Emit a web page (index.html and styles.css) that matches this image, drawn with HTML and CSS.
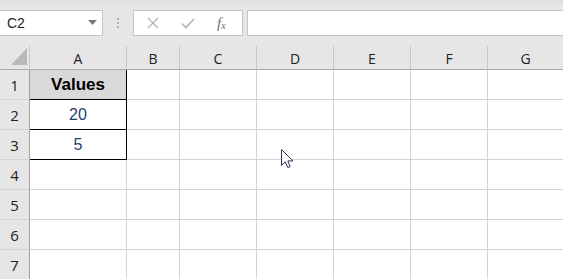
FILE: index.html
```html
<!DOCTYPE html>
<html>
<head>
<meta charset="utf-8">
<link rel="stylesheet" href="styles.css">
</head>
<body>
<div class="app">
  <div class="toolbar">
    <div class="namebox">
      <span class="name">C2</span>
      <svg class="dd" width="9" height="5" viewBox="0 0 9 5"><path d="M0 0H9L4.5 5Z" fill="#7a7a7a"/></svg>
    </div>
    <div class="dots"><i></i><i></i><i></i></div>
    <div class="fxbox">
      <svg class="ico" width="12" height="12" viewBox="0 0 12 12"><path d="M1 1L11 11M11 1L1 11" stroke="#b4b4b4" stroke-width="1.4" fill="none"/></svg>
      <svg class="ico" width="14" height="11" viewBox="0 0 14 11"><path d="M1 5.5L5 9.5L13 1" stroke="#b4b4b4" stroke-width="1.6" fill="none"/></svg>
      <span class="fx">f<sub>x</sub></span>
    </div>
    <div class="formula"></div>
  </div>
  <div class="sheet">
    <div class="hdr corner"><svg class="tri" width="16" height="17" viewBox="0 0 16 17"><path d="M16 0V17H0Z" fill="#b9b9b9"/></svg></div>
    <div class="hdr col">A</div>
    <div class="hdr col">B</div>
    <div class="hdr col">C</div>
    <div class="hdr col">D</div>
    <div class="hdr col">E</div>
    <div class="hdr col">F</div>
    <div class="hdr col last">G</div>

    <div class="hdr row">1</div>
    <div class="cell box title">Values</div>
    <div class="cell"></div><div class="cell"></div><div class="cell"></div><div class="cell"></div><div class="cell"></div><div class="cell last"></div>

    <div class="hdr row">2</div>
    <div class="cell box num">20</div>
    <div class="cell"></div><div class="cell"></div><div class="cell"></div><div class="cell"></div><div class="cell"></div><div class="cell last"></div>

    <div class="hdr row">3</div>
    <div class="cell box num">5</div>
    <div class="cell"></div><div class="cell"></div><div class="cell"></div><div class="cell"></div><div class="cell"></div><div class="cell last"></div>

    <div class="hdr row">4</div>
    <div class="cell"></div><div class="cell"></div><div class="cell"></div><div class="cell"></div><div class="cell"></div><div class="cell"></div><div class="cell last"></div>

    <div class="hdr row">5</div>
    <div class="cell"></div><div class="cell"></div><div class="cell"></div><div class="cell"></div><div class="cell"></div><div class="cell"></div><div class="cell last"></div>

    <div class="hdr row">6</div>
    <div class="cell"></div><div class="cell"></div><div class="cell"></div><div class="cell"></div><div class="cell"></div><div class="cell"></div><div class="cell last"></div>

    <div class="hdr row">7</div>
    <div class="cell"></div><div class="cell"></div><div class="cell"></div><div class="cell"></div><div class="cell"></div><div class="cell"></div><div class="cell last"></div>
  </div>
  <svg class="cursor" width="13" height="20" viewBox="0 0 13 20"><path d="M0.5 0.5V16.5L4.3 12.8L6.8 18.6L9.2 17.6L6.8 11.9H12Z" fill="#fff" stroke="#2a3450" stroke-width="1" stroke-linejoin="miter"/></svg>
</div>
</body>
</html>
```
FILE: styles.css
```css
* { box-sizing: border-box; }
html, body { margin: 0; padding: 0; }
body {
  width: 563px;
  height: 279px;
  overflow: hidden;
  background: #fff;
  font-family: "Open Sans", "Noto Sans", "Liberation Sans", sans-serif;
}
.app { position: relative; width: 563px; height: 279px; overflow: hidden; }

.toolbar {
  height: 46px;
  background: linear-gradient(#dedede 0px, #e6e6e6 5px, #e6e6e6 100%);
  display: flex;
  align-items: flex-start;
  padding-top: 10px;
}
.namebox {
  width: 103px;
  height: 26px;
  background: #fff;
  border: 1px solid #c6c6c6;
  border-left: none;
  display: flex;
  align-items: center;
  justify-content: space-between;
  padding: 0 5px 0 7px;
}
.name { font-family: "Liberation Sans", Arial, sans-serif; font-size: 14px; color: #222; }
.dd { margin-bottom: 1px; }
.dots {
  width: 30px;
  height: 26px;
  display: flex;
  flex-direction: column;
  align-items: center;
  justify-content: center;
  gap: 2px;
}
.dots i { display: block; width: 2px; height: 2px; background: #b0b0b0; }
.fxbox {
  width: 110px;
  height: 26px;
  background: #fff;
  border: 1px solid #c6c6c6;
  display: flex;
  align-items: center;
  padding-left: 13px;
  gap: 22px;
}
.fx {
  font-family: "Liberation Serif", "DejaVu Serif", serif;
  font-style: italic;
  font-size: 15px;
  color: #707070;
  margin-left: 0;
}
.fx sub { font-size: 10px; vertical-align: -1px; }
.formula {
  flex: 1;
  height: 26px;
  margin-left: 4px;
  background: #fff;
  border: 1px solid #c6c6c6;
  border-right: none;
}

.sheet {
  display: grid;
  grid-template-columns: 30px 97px 53px 77px 77px 77px 77px 75px;
  grid-template-rows: 24px repeat(7, 30px);
}
.hdr {
  background: #e6e6e6;
  color: #222;
  display: flex;
  align-items: center;
  justify-content: center;
  font-size: 14px;
}
.col {
  border-bottom: 1px solid #ababab;
  border-right: 1px solid #c8c8c8;
  padding-top: 1px;
}
.col.last { border-right: none; }
.corner {
  border-bottom: 1px solid #ababab;
  border-right: 1px solid #c8c8c8;
  position: relative;
}
.tri { position: absolute; left: 11px; top: 2px; }
.row {
  border-right: 1px solid #a0a0a0;
  border-bottom: 1px solid #d4d4d4;
  font-size: 15px;
}
.cell {
  border-right: 1px solid #d4d4d4;
  border-bottom: 1px solid #d4d4d4;
  display: flex;
  align-items: center;
  justify-content: center;
  font-family: "Liberation Sans", Arial, sans-serif;
  font-size: 16px;
}
.cell.last { border-right: none; }
.cell.box { border-right-color: #000; border-bottom-color: #000; }
.title { background: #d9d9d9; font-weight: bold; color: #000; font-size: 17px; }
.num { color: #1f3f6e; }

.cursor { position: absolute; left: 281px; top: 149px; }
```
